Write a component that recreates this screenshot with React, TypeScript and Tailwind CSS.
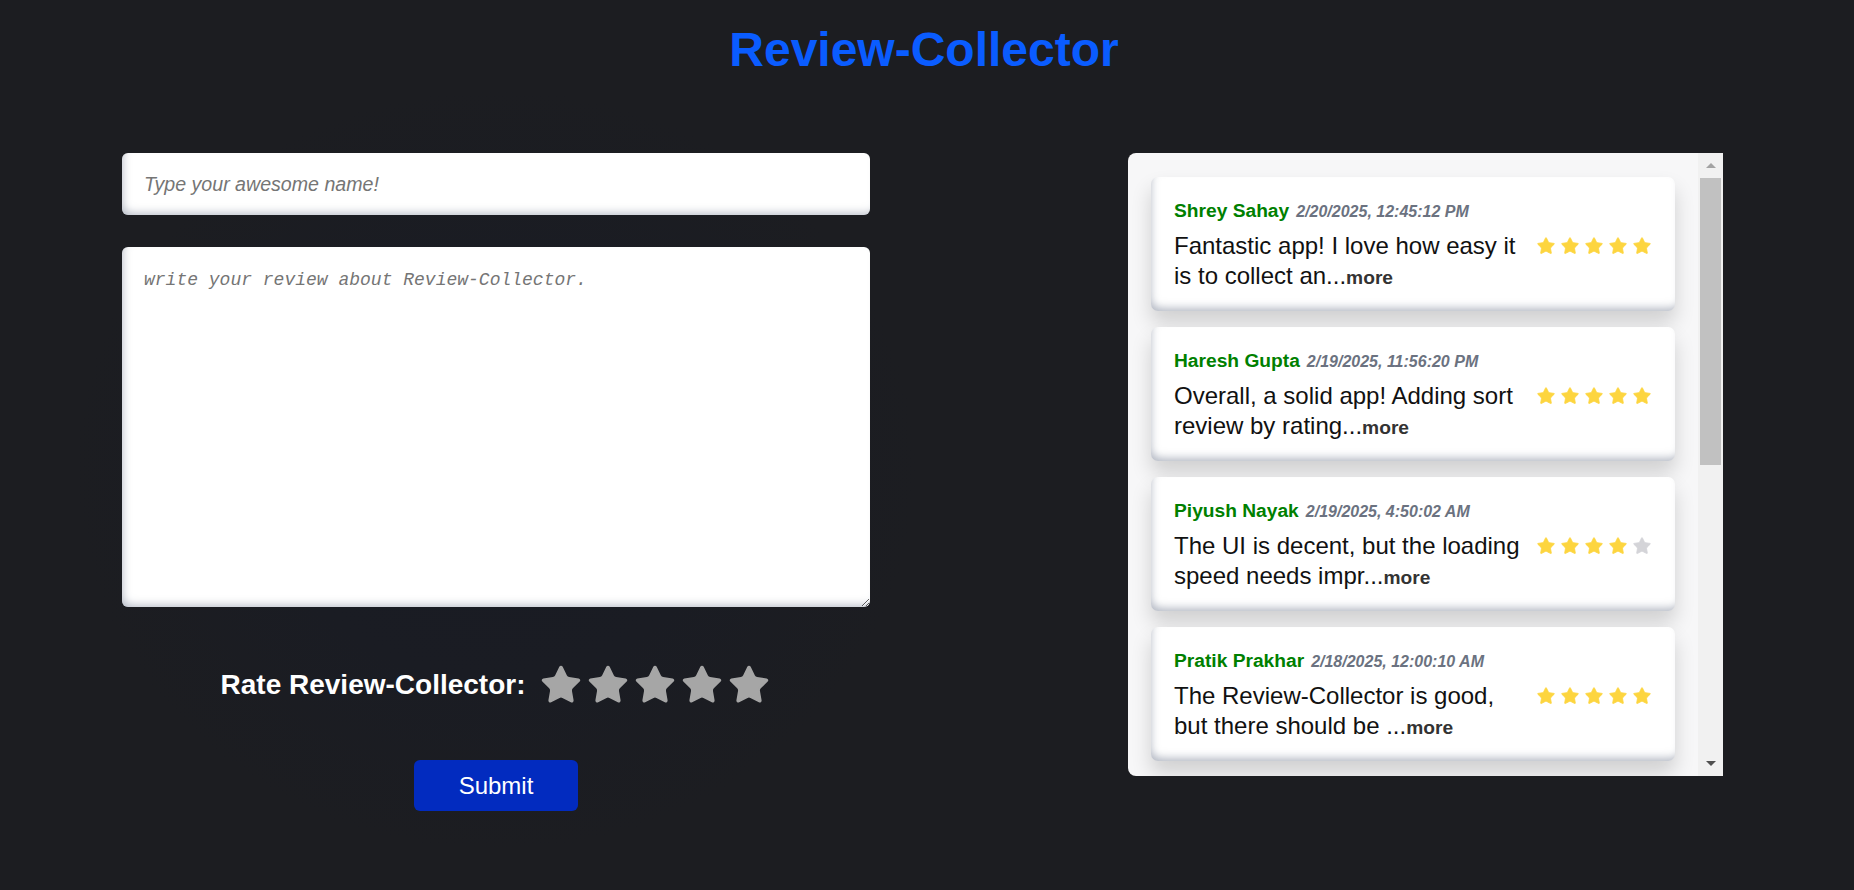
import React from "react";

const STAR_PATH =
  "M11.525 2.295a.53.53 0 0 1 .95 0l2.31 4.679a2.123 2.123 0 0 0 1.595 1.16l5.166.756a.53.53 0 0 1 .294.904l-3.736 3.638a2.123 2.123 0 0 0-.611 1.878l.882 5.14a.53.53 0 0 1-.771.56l-4.618-2.428a2.122 2.122 0 0 0-1.973 0L6.396 21.01a.53.53 0 0 1-.77-.56l.881-5.139a2.122 2.122 0 0 0-.611-1.879L2.16 9.795a.53.53 0 0 1 .294-.906l5.165-.755a2.122 2.122 0 0 0 1.597-1.16z";

function Star({ size, color }: { size: number; color: string }) {
  return (
    <svg
      viewBox="0 0 24 24"
      width={size}
      height={size}
      fill={color}
      stroke={color}
      strokeWidth={1}
      strokeLinejoin="round"
      className="block shrink-0"
    >
      <path d={STAR_PATH} />
    </svg>
  );
}

type Review = { name: string; date: string; text: string; rating: number };

const reviews: Review[] = [
  {
    name: "Shrey Sahay",
    date: "2/20/2025, 12:45:12 PM",
    text: "Fantastic app! I love how easy it is to collect an",
    rating: 5,
  },
  {
    name: "Haresh Gupta",
    date: "2/19/2025, 11:56:20 PM",
    text: "Overall, a solid app! Adding sort review by rating",
    rating: 5,
  },
  {
    name: "Piyush Nayak",
    date: "2/19/2025, 4:50:02 AM",
    text: "The UI is decent, but the loading speed needs impr",
    rating: 4,
  },
  {
    name: "Pratik Prakhar",
    date: "2/18/2025, 12:00:10 AM",
    text: "The Review-Collector is good, but there should be ",
    rating: 5,
  },
];

function ReviewCard({ r }: { r: Review }) {
  return (
    <div className="shrink-0 rounded-[7px] bg-white px-[23px] pt-[22px] pb-[18px] shadow-[inset_3px_-6px_8px_-3px_rgba(120,130,150,0.55),0_12px_20px_rgba(0,0,0,0.16)]">
      <div className="flex items-baseline gap-[7px] leading-6">
        <span className="text-[19.2px] font-bold text-[#008000]">{r.name}</span>
        <span className="text-[16px] font-bold italic text-[#6b7280]">{r.date}</span>
      </div>
      <div className="mt-[7px] flex items-start gap-[12px]">
        <p className="flex-1 text-[24px] leading-[30px] text-[#111]">
          {r.text}...
          <span className="text-[19.2px] font-bold text-[#333]">more</span>
        </p>
        <div className="flex h-[30px] items-center gap-[4px]">
          {[0, 1, 2, 3, 4].map((i) => (
            <Star key={i} size={20} color={i < r.rating ? "#fdd53f" : "#d4d4d8"} />
          ))}
        </div>
      </div>
    </div>
  );
}

export default function App() {
  return (
    <div className="min-h-[890px] w-full bg-[#1c1d21] bg-[radial-gradient(ellipse_420px_380px_at_496px_470px,#191b23_0%,#1a1c23_55%,#1c1d21_100%)] font-['Liberation_Sans',Arial,sans-serif]">
      <h1 className="pt-[26px] pr-[6px] text-center text-[48px] font-bold leading-none text-[#0a5cff]">
        Review-Collector
      </h1>

      <div className="mt-[79px] flex items-start pl-[122px]">
        {/* Left form column */}
        <div className="flex w-[748px] flex-col items-center">
          <input
            type="text"
            placeholder="Type your awesome name!"
            className="h-[62px] w-full rounded-[6px] border-0 bg-white px-[22px] text-[19.6px] text-[#222] outline-none shadow-[inset_4px_-5px_8px_-3px_rgba(120,130,150,0.5)] placeholder:italic placeholder:text-[#757575]"
          />
          <textarea
            placeholder="write your review about Review-Collector."
            className="mt-[32px] h-[360px] w-full resize rounded-[6px] border-0 bg-white px-[22px] pt-[20px] font-['Liberation_Mono',monospace] text-[18px] text-[#222] outline-none shadow-[inset_4px_-5px_8px_-3px_rgba(120,130,150,0.5)] placeholder:italic placeholder:text-[#757575]"
          />
          <div className="mt-[58px] flex h-[40px] items-center">
            <span className="text-[28px] font-bold text-white">Rate Review-Collector:</span>
            <div className="ml-[14px] flex items-center gap-[3px]">
              {[0, 1, 2, 3, 4].map((i) => (
                <Star key={i} size={44} color="#a6a6a6" />
              ))}
            </div>
          </div>
          <button className="mt-[55px] h-[51px] w-[164px] rounded-[6px] bg-[#022bbf] text-[24px] text-white">
            Submit
          </button>
        </div>

        {/* Right reviews panel */}
        <div className="ml-[258px] flex h-[623px] w-[595px] overflow-hidden rounded-l-[8px] bg-[#f7f7f8]">
          <div className="flex flex-1 flex-col gap-[16px] overflow-hidden px-[23px] pt-[24px]">
            {reviews.map((r) => (
              <ReviewCard key={r.name} r={r} />
            ))}
          </div>
          <div className="flex w-[25px] flex-col bg-[#f1f1f1]">
            <div className="flex h-[25px] items-center justify-center">
              <div className="h-0 w-0 border-x-[5px] border-b-[5px] border-x-transparent border-b-[#a3a3a3]" />
            </div>
            <div className="mx-[2px] h-[287px] bg-[#c1c1c1]" />
            <div className="flex-1" />
            <div className="flex h-[25px] items-center justify-center">
              <div className="h-0 w-0 border-x-[5px] border-t-[5px] border-x-transparent border-t-[#505050]" />
            </div>
          </div>
        </div>
      </div>
    </div>
  );
}
